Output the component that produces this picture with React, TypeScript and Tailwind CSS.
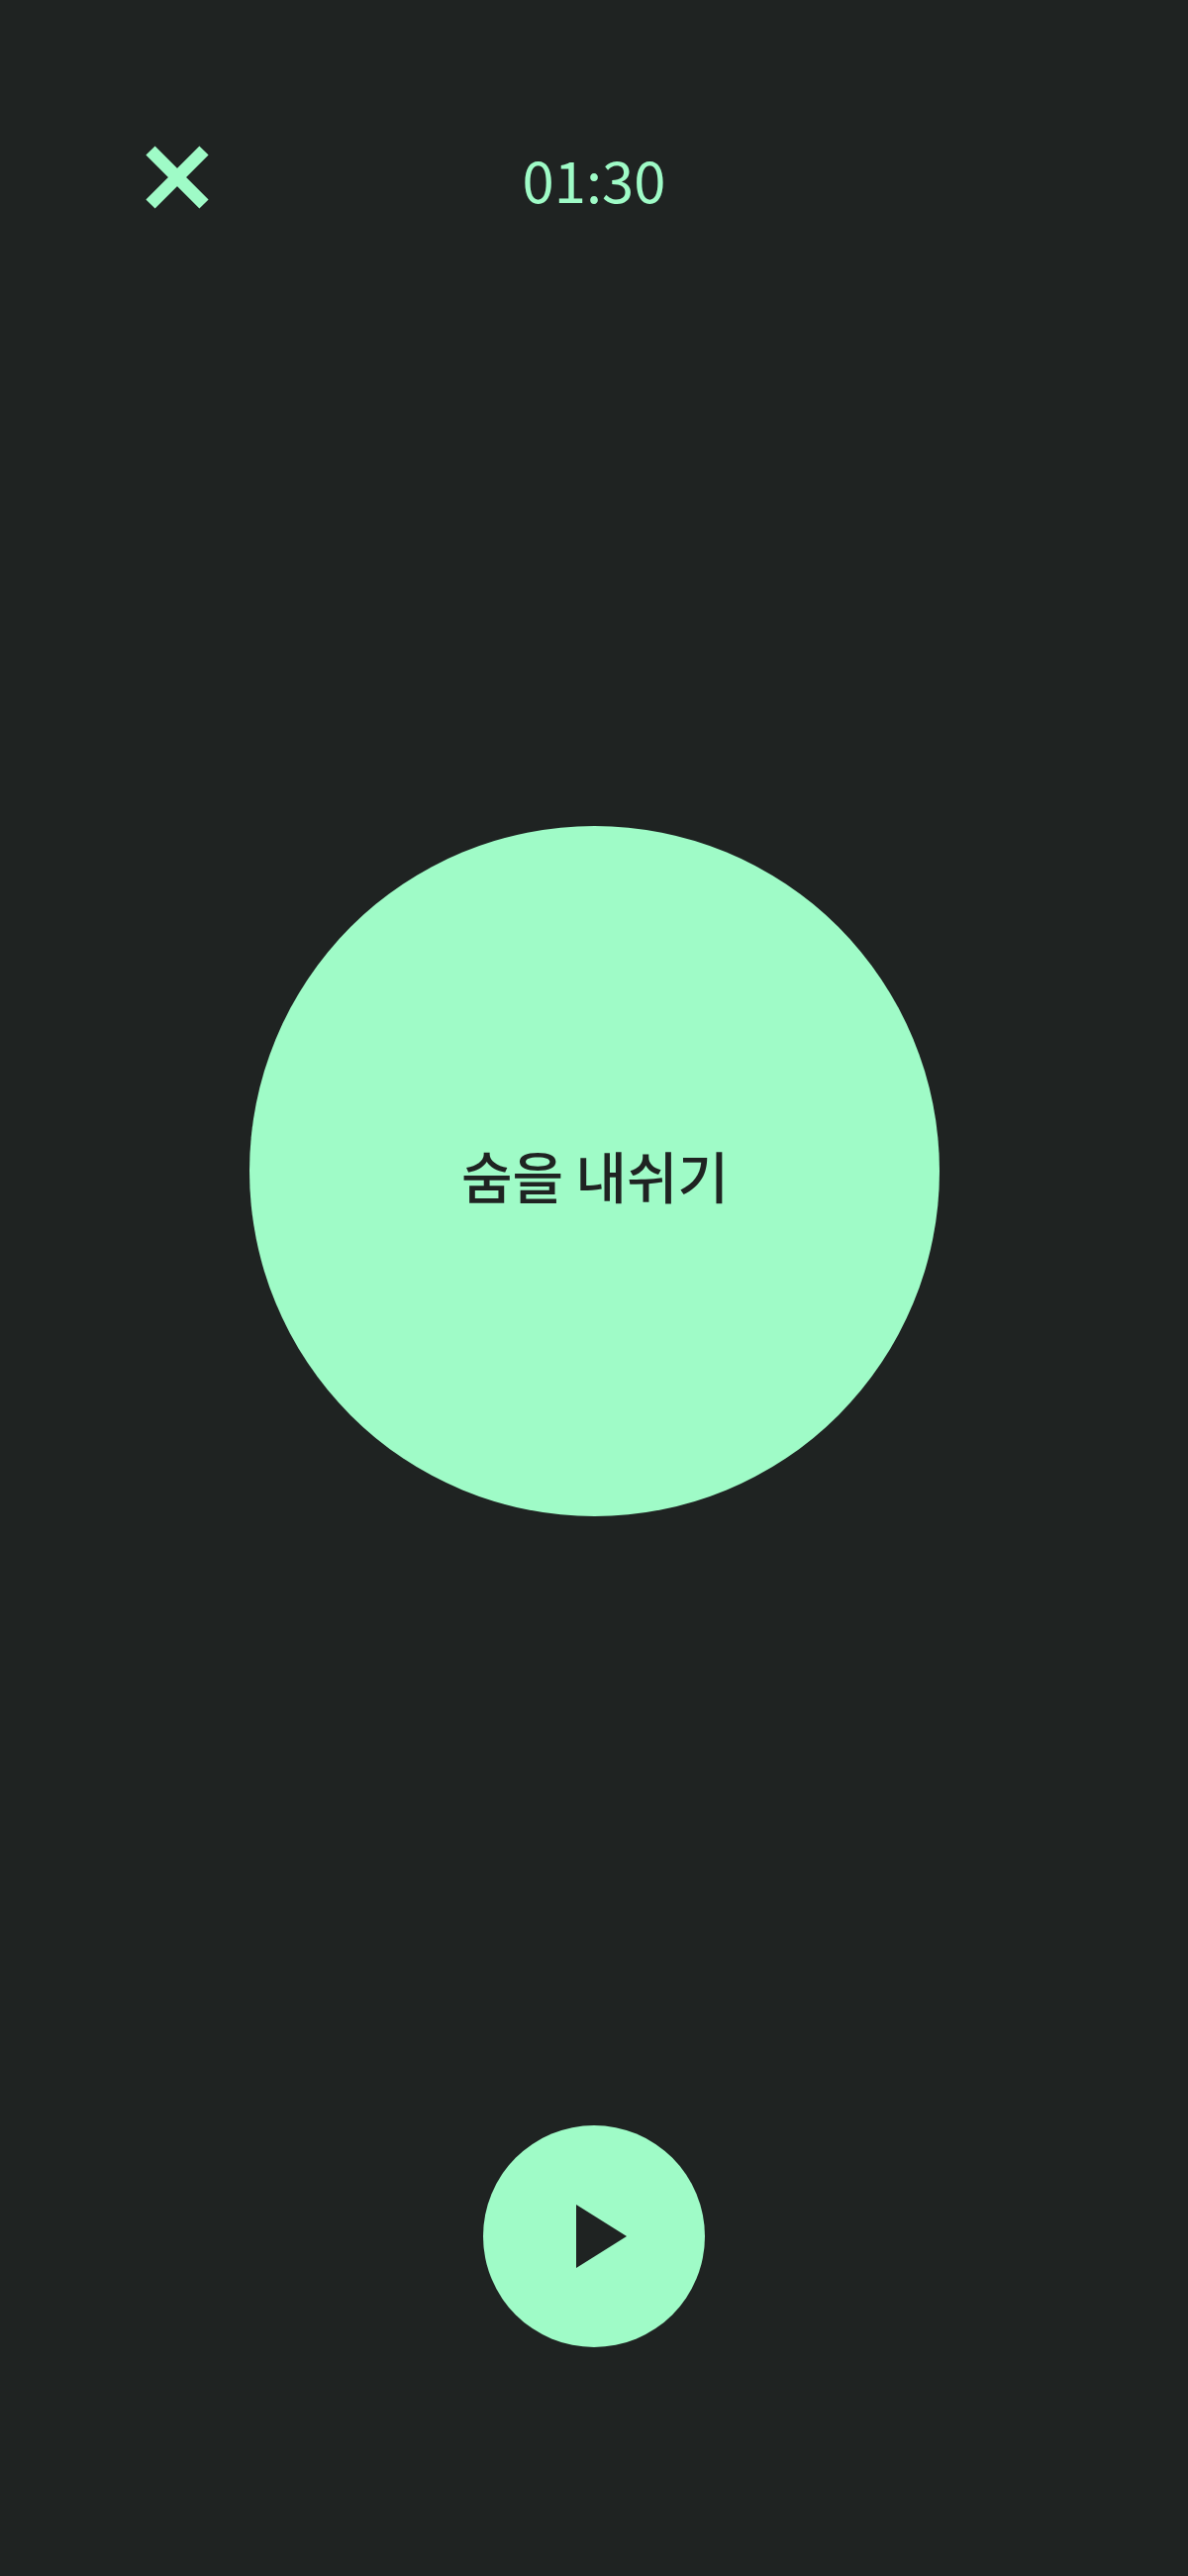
export default function App() {
  return (
    <div className="flex h-[2601px] w-full flex-col items-center bg-[#1f2322] font-['Noto_Sans_CJK_KR','Noto_Sans',sans-serif]">
      <header className="mt-[147px] grid h-[64px] w-full grid-cols-[1fr_auto_1fr] items-start px-[147px]">
        <button type="button" aria-label="close" className="h-16 w-16">
          <svg viewBox="0 0 64 64" className="h-16 w-16">
            <path d="M5 5L59 59M59 5L5 59" stroke="#9ffbc7" strokeWidth="13" fill="none" />
          </svg>
        </button>
        <span className="mt-[1px] text-[58px] leading-[64px] text-[#9ffbc7]">01:30</span>
        <div />
      </header>

      <div className="mt-[623px] flex h-[697px] w-[697px] items-center justify-center rounded-full bg-[#9ffbc7]">
        <span className="ml-[2px] mt-[6px] text-[56px] font-medium leading-[64px] text-[#1f2322]">숨을 내쉬기</span>
      </div>

      <button
        type="button"
        aria-label="play"
        className="mt-[615px] flex h-[224px] w-[224px] items-center justify-center rounded-full bg-[#9ffbc7]"
      >
        <svg viewBox="0 0 51 64" className="ml-[15px] h-16 w-[51px]">
          <polygon points="0,0 51,32 0,64" fill="#1f2322" />
        </svg>
      </button>
    </div>
  );
}
